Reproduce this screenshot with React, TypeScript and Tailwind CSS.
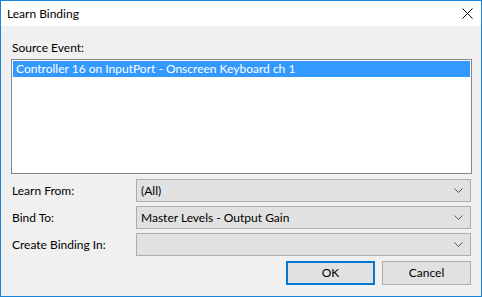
import React from "react";

const font = { fontFamily: 'Lato, "Noto Sans", sans-serif' };

function Chevron() {
  return (
    <svg width="9" height="5" viewBox="0 0 9 5" className="shrink-0">
      <path d="M0.5 0.5 L4.5 4.5 L8.5 0.5" fill="none" stroke="#555" strokeWidth="1" />
    </svg>
  );
}

function Combo({ value }: { value: string }) {
  return (
    <div className="flex items-center justify-between w-[335px] h-[23px] border border-[#adadad] bg-[#e1e1e1] pl-[4px] pr-[7px]">
      <span className="text-[12px] text-black leading-none">{value}</span>
      <Chevron />
    </div>
  );
}

export default function App() {
  const rows = [
    { label: "Learn From:", value: "(All)" },
    { label: "Bind To:", value: "Master Levels - Output Gain" },
    { label: "Create Binding In:", value: "" },
  ];

  return (
    <div
      className="w-[482px] h-[297px] border border-[#1883d7] flex flex-col bg-[#f0f0f0] text-black"
      style={font}
    >
      {/* title bar */}
      <div className="h-[25px] bg-white flex items-center justify-between pl-[6px] pr-[8px]">
        <span className="text-[12px]">Learn Binding</span>
        <svg width="11" height="11" viewBox="0 0 11 11">
          <path d="M0.5 0.5 L10.5 10.5 M10.5 0.5 L0.5 10.5" stroke="#000" strokeWidth="1" />
        </svg>
      </div>

      {/* body */}
      <div className="flex-1 flex flex-col pl-[10px] pr-[9px] pt-[14px]">
        <div className="text-[12px] leading-[16px] pl-[1px]">Source Event:</div>
        <div className="mt-[3px] h-[115px] w-[461px] border border-[#828790] bg-white p-[1px]">
          <div className="h-[16px] bg-[#3399ff] text-white text-[12px] leading-[16px] pl-[3px]">
            Controller 16 on InputPort - Onscreen Keyboard ch 1
          </div>
        </div>

        <div className="mt-[5px] flex flex-col gap-[4px]">
          {rows.map((r) => (
            <div key={r.label} className="flex items-center">
              <span className="w-[125px] text-[12px] pl-[1px]">{r.label}</span>
              <Combo value={r.value} />
            </div>
          ))}
        </div>

        <div className="mt-[5px] flex justify-end gap-[7px] pr-[1px]">
          <button className="w-[89px] h-[24px] border-2 border-[#0078d7] bg-[#e1e1e1] text-[12px]">
            OK
          </button>
          <button className="w-[89px] h-[24px] border border-[#adadad] bg-[#e1e1e1] text-[12px]">
            Cancel
          </button>
        </div>
      </div>
    </div>
  );
}
